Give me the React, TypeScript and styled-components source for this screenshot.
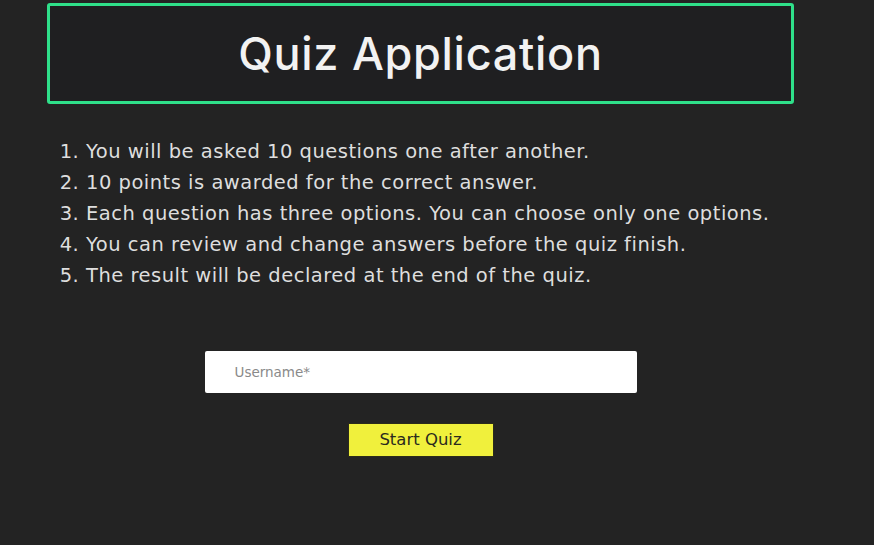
import React from "react";
import styled, { createGlobalStyle } from "styled-components";

const Global = createGlobalStyle`
  html, body { margin: 0; padding: 0; background: #232323; }
  body { font-family: "DejaVu Sans", "Noto Sans", sans-serif; color: #e2e2e2; }
`;

const Page = styled.div`
  min-height: 545px;
  box-sizing: border-box;
  padding: 3px 0 0 47px;
`;

const Column = styled.main`
  width: 747px;
  display: flex;
  flex-direction: column;
  align-items: center;
`;

const TitleBox = styled.header`
  box-sizing: border-box;
  width: 100%;
  height: 101px;
  border: 3px solid #2fe08a;
  border-radius: 3px;
  background: #1f1f21;
  display: flex;
  align-items: center;
  justify-content: center;
`;

const Title = styled.h1`
  margin: 0;
  font-family: Inter, "DejaVu Sans", sans-serif;
  font-size: 45px;
  font-weight: 500;
  letter-spacing: 0.7px;
  color: #f2f2f2;
`;

const Rules = styled.ol`
  align-self: stretch;
  margin: 33px 0 0;
  padding-left: 39px;
  font-size: 19.5px;
  letter-spacing: 0.5px;
  line-height: 30.9px;
  color: #dedede;
`;

const Rule = styled.li`
  padding-left: 0;
`;

const Form = styled.form`
  margin-top: 59px;
  display: flex;
  flex-direction: column;
  align-items: center;
  gap: 30px;
`;

const Input = styled.input`
  box-sizing: border-box;
  width: 432px;
  height: 42px;
  border: none;
  border-radius: 2px;
  background: #ffffff;
  padding: 0 0 0 30px;
  font-family: "DejaVu Sans", sans-serif;
  font-size: 13.5px;
  outline: none;
  &::placeholder { color: #8a8a8a; }
`;

const StartButton = styled.button`
  box-sizing: border-box;
  width: 146px;
  height: 34px;
  border: 1px solid #2b2b1a;
  background: #f0f03c;
  color: #2a2a1e;
  font-family: "DejaVu Sans", sans-serif;
  font-size: 16.5px;
  cursor: pointer;
`;

const rules = [
  "You will be asked 10 questions one after another.",
  "10 points is awarded for the correct answer.",
  "Each question has three options. You can choose only one options.",
  "You can review and change answers before the quiz finish.",
  "The result will be declared at the end of the quiz.",
];

export default function App() {
  return (
    <>
      <Global />
      <Page>
        <Column>
          <TitleBox>
            <Title>Quiz Application</Title>
          </TitleBox>
          <Rules>
            {rules.map((r) => (
              <Rule key={r}>{r}</Rule>
            ))}
          </Rules>
          <Form onSubmit={(e) => e.preventDefault()}>
            <Input placeholder="Username*" />
            <StartButton type="submit">Start Quiz</StartButton>
          </Form>
        </Column>
      </Page>
    </>
  );
}
